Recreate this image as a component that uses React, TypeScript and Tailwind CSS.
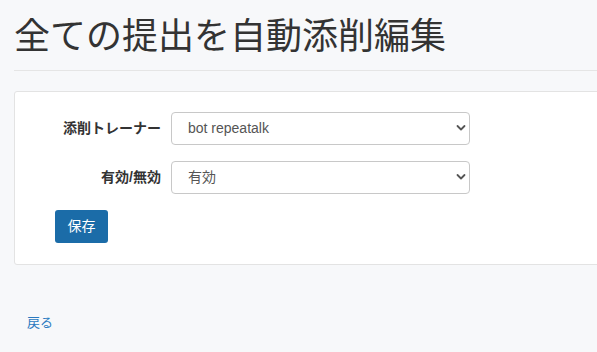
import React from "react";

const jp = { fontFamily: '"Liberation Sans", "Noto Sans CJK JP", sans-serif' };

const Chevron = () => (
  <svg
    className="pointer-events-none absolute right-[4px] top-1/2 -translate-y-1/2"
    width="10"
    height="7"
    viewBox="0 0 10 7"
    fill="none"
  >
    <path d="M1.5 1.5L5 5L8.5 1.5" stroke="#555" strokeWidth="1.8" strokeLinecap="round" strokeLinejoin="round" />
  </svg>
);

const SelectRow = ({ label, value, options }: { label: string; value: string; options: string[] }) => (
  <div className="flex items-center">
    <label className="w-[116px] pr-[10px] text-right text-[14px] font-bold text-[#333]">{label}</label>
    <div className="relative">
      <select
        defaultValue={value}
        className="h-[33px] w-[299px] appearance-none rounded-[4px] border border-[#c8c8c8] bg-white pl-[16px] text-[14px] text-[#555] outline-none"
        style={jp}
      >
        {options.map((o) => (
          <option key={o}>{o}</option>
        ))}
      </select>
      <Chevron />
    </div>
  </div>
);

export default function App() {
  return (
    <div className="min-h-screen w-full overflow-hidden bg-[#f7f8fa]" style={jp}>
      <div className="w-[760px] pl-[14px]">
        {/* Page header */}
        <h1 className="pt-[17px] pb-[13px] text-[36px] leading-[1.1] font-normal text-[#333]">
          全ての提出を自動添削編集
        </h1>
        <hr className="border-t border-[#e5e5e5]" />

        {/* Form panel */}
        <div className="mt-[20px] flex flex-col gap-[16px] rounded-[3px] border border-[#e3e3e3] bg-white px-[40px] pt-[20px] pb-[21px]">
          <SelectRow label="添削トレーナー" value="bot repeatalk" options={["bot repeatalk"]} />
          <SelectRow label="有効/無効" value="有効" options={["有効", "無効"]} />
          <div>
            <button className="h-[33px] rounded-[3px] bg-[#1b6ca8] px-[12.5px] text-[14px] text-white">保存</button>
          </div>
        </div>

        <div className="mt-[45px] pl-[13px]">
          <a href="#" className="text-[13px] text-[#2a7ac0]">
            戻る
          </a>
        </div>
      </div>
    </div>
  );
}
